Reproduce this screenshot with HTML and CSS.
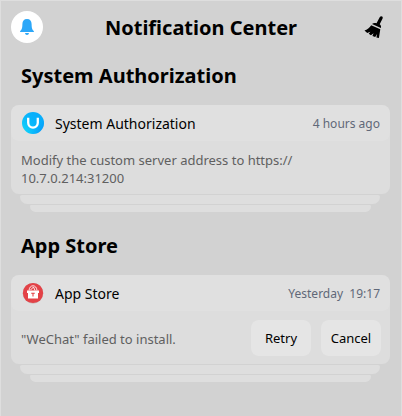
FILE: index.html
```html
<!DOCTYPE html>
<html lang="en">
<head>
<meta charset="utf-8">
<title>Notification Center</title>
<link rel="stylesheet" href="styles.css">
</head>
<body>
<main class="panel">
  <header class="top">
    <button class="bell" aria-label="Notification settings">
      <svg width="32" height="32" viewBox="0 0 32 32"><path fill="#2ca7f8" d="M16 8c-3.200 0-4.500 2-4.600 5-.1 4.200-.5 5.500-2.300 7.200v.8h13.800v-.8c-1.800-1.700-2.200-3-2.300-7.200-.1-3-1.400-5-4.600-5z M14 22h4c-.2 1.300-.9 2-2 2s-1.800-.7-2-2z"/></svg>
    </button>
    <h1>Notification Center</h1>
    <button class="clear" aria-label="Clear all">
      <svg width="20" height="24" viewBox="0 0 20 24"><path d="M15.700 2.200c1.300-1.700 3.700-.6 2.900 1.300l-2.900 5.700c1.300 1 1.600 2.300 1.200 3.800L8 8.900c1.300-1 2.900-1.200 4.500-.6z"/><path d="M7.200 10.200l9.100 4.100-1.400 8.700-2.500-.6.700-3.300-1.900 2.900-2.800-1.100 1.200-2.700-2.700 2.100-2.200-1.500 1.700-2.100-3.200 1.300-2.700-2.500C3.200 14.700 5.600 12.700 7.200 10.200z"/></svg>
    </button>
  </header>
  <section class="group">
    <h2>System Authorization</h2>
    <article class="card">
      <div class="card-head">
        <svg class="app-icon" width="22" height="22" viewBox="0 0 22 22"><defs><linearGradient id="auth" x1="1" y1="0" x2="0" y2="1"><stop offset="0" stop-color="#08a9fb"/><stop offset=".5" stop-color="#09b5fb"/><stop offset="1" stop-color="#13dcf9"/></linearGradient><linearGradient id="edge" x1="1" y1="1" x2="0" y2="0"><stop offset=".1" stop-color="#087bfa" stop-opacity=".5"/><stop offset=".5" stop-color="#00b8ff" stop-opacity="0"/></linearGradient></defs><circle cx="11" cy="11" r="11" fill="url(#auth)"/><circle cx="11" cy="11" r="11" fill="url(#edge)"/><path d="M6.200 5.700v5.100a4.800 4.800 0 0 0 9.600 0V5.700" fill="none" stroke="#fff" stroke-width="2.300"/></svg>
        <h3>System Authorization</h3>
        <time>4 hours ago</time>
      </div>
      <div class="card-body"><p>Modify the custom server address to https://<br>10.7.0.214:31200</p></div>
    </article>
    <div class="layer"></div>
    <div class="layer last"></div>
  </section>
  <section class="group">
    <h2>App Store</h2>
    <article class="card">
      <div class="card-head">
        <svg class="app-icon" width="22" height="22" viewBox="0 0 22 22"><circle cx="11" cy="11.300" r="10.300" fill="#c9a8a8"/><circle cx="11" cy="11" r="10.100" fill="#e34247"/><path fill="#fff" d="M5 8.500h12V11H5zM6 11h10v5.500H6z"/><path d="M7 8.500c.3-3 1.800-4.700 4-4.700s3.700 1.700 4 4.700M8.500 8l3-3 1.500 3.500" fill="none" stroke="#fff" stroke-width=".9"/><path d="M9.200 11.200h3.600M11 11.200v3.300" stroke="#e34247" stroke-width="1.100"/></svg>
        <h3>App Store</h3>
        <time>Yesterday&nbsp; 19:17</time>
      </div>
      <div class="card-body"><p>"WeChat" failed to install.</p><button class="action">Retry</button><button class="action">Cancel</button></div>
    </article>
    <div class="layer"></div>
    <div class="layer last"></div>
  </section>
</main>
</body>
</html>
```
FILE: styles.css
```css
* { box-sizing: border-box; }
body { margin: 0; font-family: "Noto Sans", sans-serif; color: #000; }
h1, h2, h3, p { margin: 0; }
button { border: 0; padding: 0; font: inherit; color: inherit; }
svg { display: block; }
.panel { height: 416px; background: #d2d2d2; border: 1px solid #dedede; border-bottom: 0; padding: 10px 11px 0 10px; overflow: hidden; }
.top { display: flex; align-items: center; justify-content: space-between; height: 32px; padding-right: 6px; }
.bell { width: 32px; height: 32px; border-radius: 50%; background: #fff; }
.clear { width: 20px; height: 24px; background: none; }
h1 { font-size: 20px; line-height: 32px; font-weight: 700; margin-right: 5px; padding-top: 2px; }
.group { height: 170px; padding-top: 17px; }
h2 { height: 45px; padding-left: 10px; font-size: 20px; line-height: 32px; font-weight: 700; }
.card { height: 89px; border-radius: 8px; background: #dddddd; overflow: hidden; }
.card-head { display: flex; align-items: center; height: 36px; padding: 0 10px 0 11px; background: #e0e0e0; border-radius: 8px; }
h3 { margin-left: 11px; font-size: 14px; line-height: 20px; font-weight: 400; padding-top: 1px; }
time { margin-left: auto; font-size: 12px; line-height: 18px; color: #606878; padding-top: 2px; }
.card-body { display: flex; align-items: center; height: 53px; padding: 0 9px 0 10px; gap: 10px; }
p { flex: 1; font-size: 13px; line-height: 18px; color: #606060; padding-top: 3px; }
.action { width: 60px; height: 36px; border-radius: 8px; background: #e5e5e5; font-size: 13px; margin-top: 1px; }
.layer { height: 9px; margin: 1px 10px 0 9px; background: #dedede; border-radius: 2px 2px 8px 8px; }
.last { height: 7px; margin: 1px 19px 0; }
```
